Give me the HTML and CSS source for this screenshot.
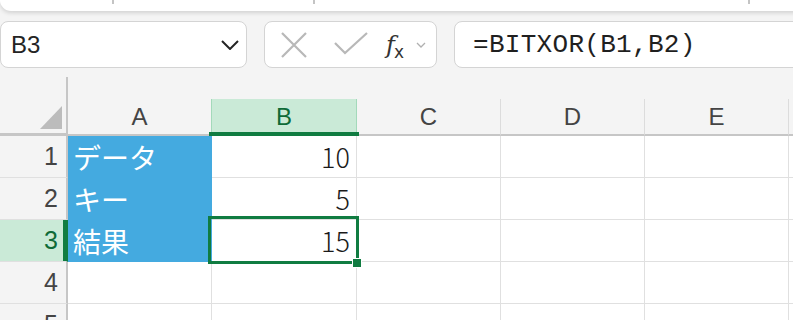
FILE: index.html
```html
<!DOCTYPE html>
<html lang="ja">
<head>
    <meta charset="UTF-8">
    <title>BITXOR</title>
    <link rel="stylesheet" href="styles.css">
</head>
<body>
    <!-- ribbon edge -->
    <div class="topbar">
        <span class="sep s1"></span>
        <span class="sep s2"></span>
        <span class="sep s3"></span>
    </div>

    <!-- name box + formula bar -->
    <div class="fbar">
        <div class="namebox">
            <span class="ref">B3</span>
            <svg class="chev" width="18" height="10" viewBox="0 0 18 10"><path d="M1 1 L9 9 L17 1" fill="none" stroke="#242424" stroke-width="2"/></svg>
        </div>
        <div class="fbtns">
            <svg width="26" height="26" viewBox="0 0 26 26"><path d="M1 1 L25 25 M25 1 L1 25" stroke="#b8b8b8" stroke-width="2.2" fill="none"/></svg>
            <svg width="34" height="24" viewBox="0 0 34 24"><path d="M1 11 L11 21 L33 1" stroke="#b8b8b8" stroke-width="2.2" fill="none"/></svg>
            <span class="fx"><i>f</i><span class="sub">x</span></span>
            <svg class="mini" width="10" height="6" viewBox="0 0 10 6"><path d="M1 1 L5 5 L9 1" stroke="#b0b0b0" stroke-width="1.3" fill="none"/></svg>
        </div>
        <div class="formula">=BITXOR(B1,B2)</div>
    </div>

    <!-- sheet -->
    <div class="sheet">
        <div class="corner"><span class="tri"></span></div>
        <div class="colh">A</div>
        <div class="colh on">B</div>
        <div class="colh">C</div>
        <div class="colh">D</div>
        <div class="colh">E</div>
        <div class="colh"></div>

        <div class="rowh">1</div>
        <div class="cell blue">データ</div>
        <div class="cell num">10</div>
        <div class="cell"></div><div class="cell"></div><div class="cell"></div><div class="cell"></div>

        <div class="rowh">2</div>
        <div class="cell blue">キー</div>
        <div class="cell num">5</div>
        <div class="cell"></div><div class="cell"></div><div class="cell"></div><div class="cell"></div>

        <div class="rowh on">3</div>
        <div class="cell blue">結果</div>
        <div class="cell num sel">15</div>
        <div class="cell"></div><div class="cell"></div><div class="cell"></div><div class="cell"></div>

        <div class="rowh">4</div>
        <div class="cell"></div><div class="cell"></div><div class="cell"></div><div class="cell"></div><div class="cell"></div><div class="cell"></div>

        <div class="rowh">5</div>
        <div class="cell"></div><div class="cell"></div><div class="cell"></div><div class="cell"></div><div class="cell"></div><div class="cell"></div>
    </div>
</body>
</html>
```

FILE: styles.css
```css
body { margin: 0; background: #f4f4f4; font-family: 'Liberation Sans', Arial, sans-serif; color: #242424; overflow: hidden; }

.topbar { height: 11px; background: #fff; border-radius: 0 0 0 13px; box-shadow: 0 2px 4px rgba(0,0,0,0.14); display: flex; margin-right: -20px; }
.sep { width: 2px; height: 4px; background: #c4c4c4; }
.s1 { margin-left: 112px; }
.s2 { margin-left: 199px; }
.s3 { margin-left: 433px; }

.fbar { display: flex; height: 47px; margin-top: 10px; }
.namebox, .fbtns, .formula { background: #fff; border: 1.5px solid #d4d4d4; border-radius: 8px; box-sizing: border-box; display: flex; align-items: center; }
.namebox { width: 247px; padding: 0 7px 0 10px; justify-content: space-between; }
.ref { font-size: 24px; }
.fbtns { width: 173px; margin-left: 17px; padding-left: 16px; }
.fbtns svg:nth-child(2) { margin-left: 27px; margin-top: -2px; }
.fx { margin-left: 18px; font-family: 'DejaVu Serif', serif; font-size: 24px; color: #333; }
.fx .sub { font-family: 'DejaVu Sans', sans-serif; font-size: 17px; position: relative; top: 5px; margin-left: -1px; }
.mini { margin-left: 12px; }
.formula { flex: 1; margin-left: 17px; margin-right: -20px; padding-left: 18px; font-family: 'Liberation Mono', monospace; font-size: 26px; letter-spacing: 0.3px; color: #1f1f1f; }

.sheet { display: grid; grid-template-columns: 68px 144px 145px 144px 144px 144px 30px; grid-template-rows: 59px repeat(5, 42px); margin-top: 9px; }

.corner { border-right: 2px solid #c6c6c6; border-bottom: 3px solid #c6c6c6; display: flex; justify-content: flex-end; align-items: flex-end; }
.tri { width: 22px; height: 23px; margin: 0 4px 4px 0; background: #bcbcbc; clip-path: polygon(100% 0, 100% 100%, 0 100%); }

.colh { align-self: end; height: 37px; box-sizing: border-box; border-right: 1px solid #dcdcdc; border-bottom: 2px solid #c6c6c6; display: flex; align-items: center; justify-content: center; font-size: 24px; color: #444; }
.colh.on { position: relative; background: #caead7; color: #0e6b37; border-left: 1px solid #a3d9ba; border-right: 1px solid #a3d9ba; margin-left: -1px; }
.colh.on::after { content: ""; position: absolute; left: -3px; right: -3px; bottom: -2px; height: 4px; background: #107c41; }

.rowh { border-right: 2px solid #c6c6c6; border-bottom: 1px solid #e0e0e0; display: flex; align-items: center; justify-content: flex-end; padding-right: 8px; font-size: 25px; color: #444; }
.rowh.on { background: #caead7; color: #0e6b37; box-shadow: inset -3px 0 #107c41; border-right-color: #107c41; }

.cell { background: #fff; border-right: 1px solid #e0e0e0; border-bottom: 1px solid #e0e0e0; display: flex; align-items: center; font-family: 'Noto Sans CJK JP', sans-serif; font-size: 27px; color: #1a1a1a; }
.blue { background: #44aae0; border-color: #44aae0; color: #fff; padding-left: 5px; font-size: 28px; }
.num { justify-content: flex-end; padding-right: 6px; font-weight: 300; }
.sel { position: relative; }
.sel::after { content: ""; position: absolute; left: -4px; top: -4px; right: -3px; bottom: -3px; border: 3px solid #107c41; }
.sel::before { content: ""; position: absolute; right: -6px; bottom: -7px; width: 8px; height: 8px; background: #107c41; border: 1px solid #fff; z-index: 1; }
```
